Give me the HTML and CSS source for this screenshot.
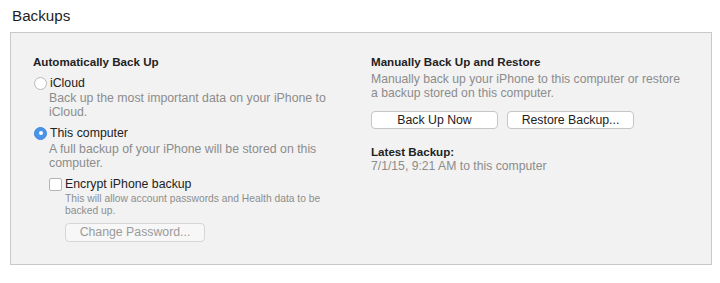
FILE: index.html
```html
<!DOCTYPE html>
<html lang="en">
<head>
    <meta charset="UTF-8">
    <meta name="viewport" content="width=device-width, initial-scale=1.0">
    <title>Backups</title>
    <link rel="stylesheet" href="styles.css">
</head>
<body>

    <h2 class="section-title">Backups</h2>

    <div class="panel">
        <div class="column left-column">
            <h3 class="group-title">Automatically Back Up</h3>

            <div class="option option-first">
                <span class="radio"></span>
                <span class="option-label">iCloud</span>
            </div>
            <div class="option-desc">Back up the most important data on your iPhone to iCloud.</div>

            <div class="option">
                <span class="radio checked"></span>
                <span class="option-label">This computer</span>
            </div>
            <div class="option-desc desc-wide">A full backup of your iPhone will be stored on this computer.</div>

            <div class="sub-option">
                <div class="option check-row">
                    <span class="checkbox"></span>
                    <span class="option-label">Encrypt iPhone backup</span>
                </div>
                <div class="small-desc">This will allow account passwords and Health data to be backed up.</div>
                <button class="mac-button disabled">Change Password...</button>
            </div>
        </div>

        <div class="column right-column">
            <h3 class="group-title">Manually Back Up and Restore</h3>
            <div class="right-desc">Manually back up your iPhone to this computer or restore a backup stored on this computer.</div>
            <div class="button-row">
                <button class="mac-button">Back Up Now</button>
                <button class="mac-button">Restore Backup...</button>
            </div>
            <h3 class="group-title latest-title">Latest Backup:</h3>
            <div class="latest-date">7/1/15, 9:21 AM to this computer</div>
        </div>
    </div>

</body>
</html>
```

FILE: styles.css
```css
body {
    margin: 0;
    padding: 0;
    background-color: #ffffff;
    font-family: "Liberation Sans", Arial, sans-serif;
    color: #222222;
}

.section-title {
    margin: 0;
    padding: 6px 0 0 12px;
    font-size: 15.2px;
    font-weight: normal;
    line-height: 20px;
    color: #1e1e1e;
}

.panel {
    margin: 6px 0 0 10px;
    width: 702px;
    height: 233px;
    background-color: #f2f2f2;
    border: 1px solid #c9c9c9;
    display: grid;
    grid-template-columns: 338px 1fr;
    padding: 0 0 0 22px;
    box-sizing: border-box;
}

.column {
    padding-top: 22px;
}

.group-title {
    margin: 0;
    font-size: 11.6px;
    font-weight: bold;
    line-height: 14px;
    color: #222222;
}

.option {
    display: flex;
    align-items: center;
    margin-top: 7px;
    font-size: 12.3px;
    line-height: 14px;
    color: #222222;
}

.option-label {
    margin-left: 3px;
}

.radio {
    width: 11px;
    height: 11px;
    border-radius: 50%;
    border: 1px solid #b9b9b9;
    background-color: #ffffff;
    box-sizing: content-box;
    margin-left: 1px;
    position: relative;
}

.radio.checked {
    border-color: #3b86e0;
    background-color: #4a94ea;
}

.radio.checked::after {
    content: "";
    position: absolute;
    top: 3.5px;
    left: 3.5px;
    width: 4px;
    height: 4px;
    border-radius: 50%;
    background-color: #ffffff;
}

.option-desc {
    margin-top: 2px;
    padding-left: 16px;
    width: 284px;
    font-size: 12.3px;
    line-height: 13.5px;
    color: #8c8c8c;
}

.desc-wide {
    line-height: 14px;
}

.sub-option {
    padding-left: 16px;
}

.check-row {
    margin-top: 7px;
}

.checkbox {
    width: 11px;
    height: 11px;
    border: 1px solid #b5b5b5;
    border-radius: 2px;
    background-color: #ffffff;
}

.small-desc {
    margin-top: 2px;
    padding-left: 16px;
    width: 266px;
    font-size: 10.3px;
    line-height: 12px;
    color: #8e8e8e;
}

.mac-button {
    display: block;
    height: 19px;
    padding: 0;
    font-family: "Liberation Sans", Arial, sans-serif;
    font-size: 12.3px;
    line-height: 17px;
    color: #222222;
    background-color: #ffffff;
    border: 1px solid #c6c6c6;
    border-radius: 4px;
    text-align: center;
}

.mac-button.disabled {
    margin: 6px 0 0 16px;
    width: 140px;
    color: #9b9b9b;
    background-color: #f7f7f7;
    border-color: #d6d6d6;
}

.right-desc {
    margin-top: 3px;
    width: 312px;
    font-size: 12.2px;
    line-height: 14px;
    color: #8c8c8c;
}

.button-row {
    display: flex;
    gap: 9px;
    margin-top: 11px;
}

.button-row .mac-button {
    width: 127px;
    height: 18px;
    line-height: 16px;
}

.latest-title {
    margin-top: 16px;
}

.latest-date {
    font-size: 12.2px;
    line-height: 14px;
    color: #8c8c8c;
}
```
